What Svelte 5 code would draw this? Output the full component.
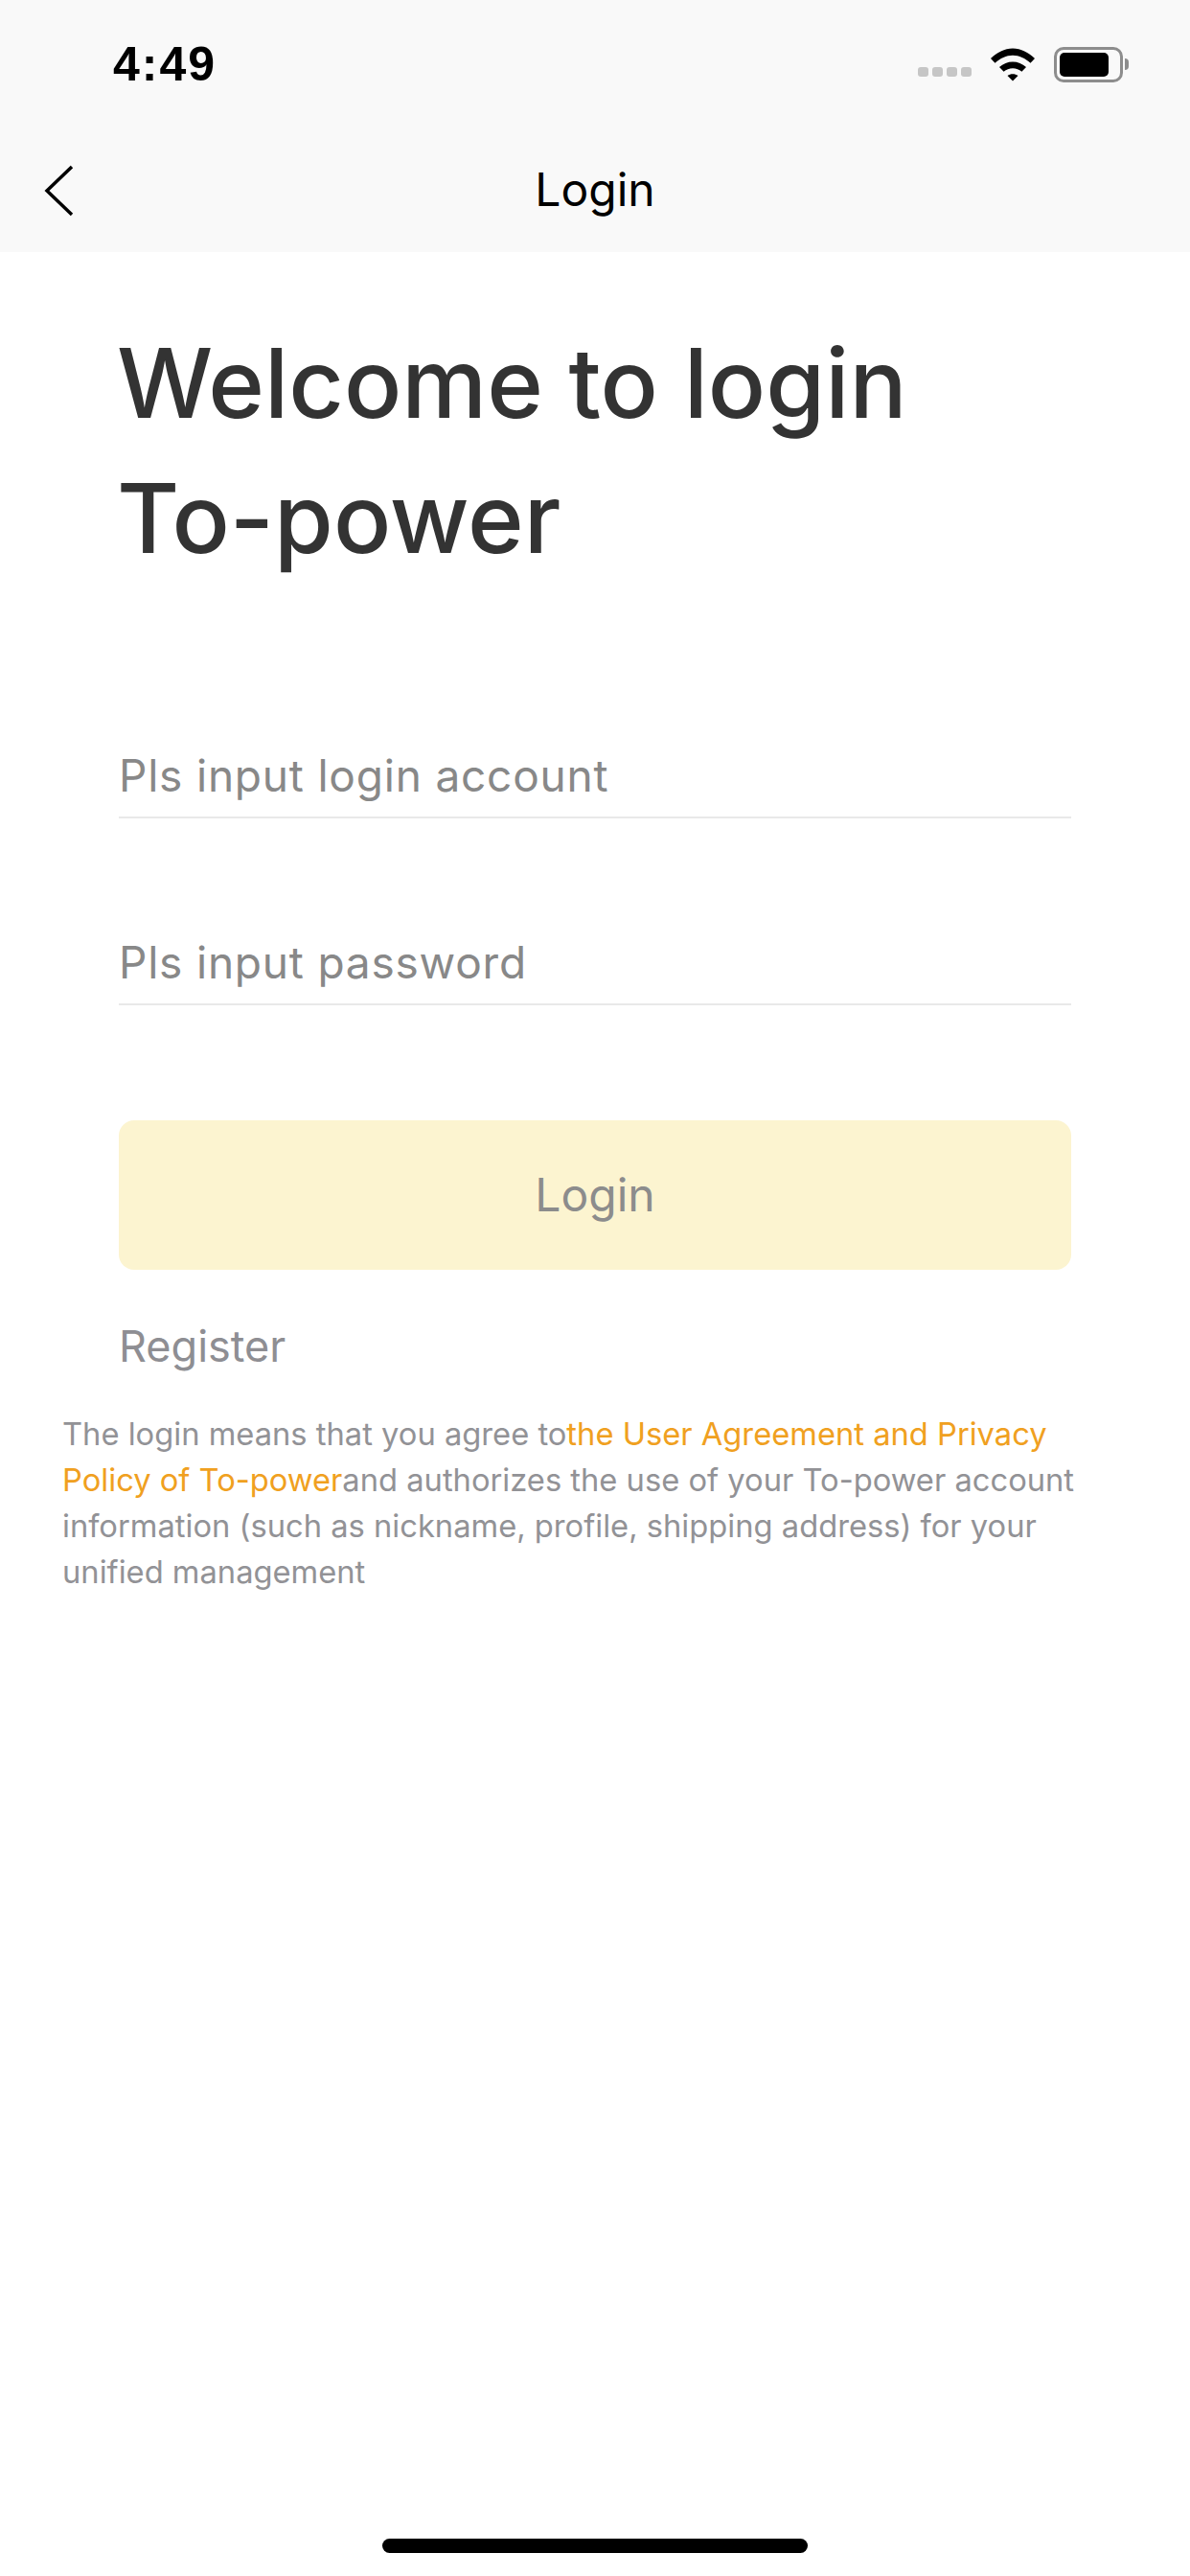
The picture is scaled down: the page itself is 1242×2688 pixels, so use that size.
<script>
  let account = $state("");
  let password = $state("");
</script>

<div class="screen">
  <header class="top">
    <div class="status">
      <span class="time">4:49</span>
      <div class="indicators">
        <div class="dots"><i></i><i></i><i></i><i></i></div>
        <svg class="wifi" width="48" height="37" viewBox="0 0 48 36">
          <path d="M1 11.500C7.500 5.500 15.500 1 24 1s16.500 4.500 23 10.500l-4.500 4.800C37 11.500 30.800 8.300 24 8.300S11 11.500 5.500 16.300z" fill="#000" />
          <path d="M10 20.500c4-3.600 8.800-5.600 14-5.600s10 2 14 5.600l-4.600 4.800c-2.700-2.300-5.900-3.600-9.400-3.600s-6.700 1.300-9.400 3.600z" fill="#000" />
          <path d="M18.500 29.500c1.600-1.200 3.500-1.800 5.500-1.800s3.900.6 5.500 1.800L24 35z" fill="#000" />
        </svg>
        <div class="battery"><div class="level"></div></div>
        <div class="nub"></div>
      </div>
    </div>
    <div class="nav">
      <svg class="back" width="36" height="54" viewBox="0 0 36 54">
        <path d="M31 2 L5 27 L31 52" fill="none" stroke="#000" stroke-width="3.500" />
      </svg>
      <h1>Login</h1>
    </div>
  </header>

  <main>
    <div class="form">
      <h2>Welcome to login<br />To-power</h2>
      <input placeholder="Pls input login account" bind:value={account} />
      <input placeholder="Pls input password" type="password" bind:value={password} />
      <button>Login</button>
      <a class="register" href="#register">Register</a>
    </div>
    <p class="terms">
      The login means that you agree to<span>the User Agreement and Privacy Policy of To-power</span>and authorizes the use of your To-power account information (such as nickname, profile, shipping address) for your unified management
    </p>
  </main>

  <div class="home"></div>
</div>

<style>
  :global(body) {
    margin: 0;
    background: #fff;
  }
  .screen {
    width: 1242px;
    height: 2688px;
    display: flex;
    flex-direction: column;
    font-family: Inter, "Noto Sans", sans-serif;
    position: relative;
    overflow: hidden;
  }
  .top {
    height: 263px;
    background: #f9f9f9;
  }
  .status {
    height: 132px;
    padding: 2px 70px 0 118px;
    box-sizing: border-box;
    display: flex;
    align-items: center;
    justify-content: space-between;
  }
  .time {
    font-family: "Liberation Sans", sans-serif;
    font-size: 50px;
    font-weight: 700;
    letter-spacing: 2px;
    color: #000;
  }
  .indicators {
    display: flex;
    align-items: center;
    position: relative;
  }
  .dots {
    display: flex;
    gap: 4px;
    margin: 16px 19px 0 0;
  }
  .dots i {
    width: 11px;
    height: 10px;
    border-radius: 3px;
    background: #c6c6c6;
  }
  .wifi {
    margin-right: 19px;
  }
  .battery {
    width: 72px;
    height: 37px;
    box-sizing: border-box;
    border: 3px solid #8d8d8d;
    border-radius: 10px;
    padding: 3px;
  }
  .level {
    height: 100%;
    width: 85%;
    background: #000;
    border-radius: 5px;
  }
  .nub {
    position: absolute;
    right: -6px;
    top: 12px;
    width: 4px;
    height: 12px;
    background: #8d8d8d;
    border-radius: 0 4px 4px 0;
  }
  .nav {
    height: 131px;
    position: relative;
    display: flex;
    align-items: center;
    justify-content: center;
  }
  .back {
    position: absolute;
    left: 44px;
    top: 40px;
  }
  h1 {
    margin: 0;
    font-size: 48px;
    font-weight: 400;
    color: #000;
  }
  .form {
    padding: 0 124px;
    display: flex;
    flex-direction: column;
  }
  h2 {
    margin: 0 0 164px -2px;
    padding-top: 66px;
    font-size: 100px;
    line-height: 141px;
    font-weight: 500;
    color: #333;
  }
  input {
    width: 100%;
    box-sizing: border-box;
    height: 79px;
    margin-bottom: 116px;
    padding: 0 0 10px;
    border: 0;
    border-bottom: 2px solid #e9e9e9;
    outline: none;
    background: none;
    font: inherit;
    font-size: 46px;
    letter-spacing: 0.8px;
    color: #333;
  }
  input::placeholder {
    color: #888;
    opacity: 1;
  }
  button {
    height: 156px;
    margin-top: 4px;
    padding: 0 0 2px;
    border: 0;
    border-radius: 16px;
    background: #fcf4d0;
    color: #8c8c8c;
    font: inherit;
    font-size: 48px;
  }
  .register {
    margin-top: 52px;
    font-size: 45px;
    color: #8e8e93;
    text-decoration: none;
  }
  .terms {
    margin: 40px 0 0;
    padding: 0 82px 0 65px;
    font-size: 32.700px;
    line-height: 48px;
    color: #929296;
  }
  .terms span {
    color: #f0a020;
  }
  .home {
    position: absolute;
    left: 399px;
    bottom: 24px;
    width: 444px;
    height: 15px;
    border-radius: 8px;
    background: #000;
  }
</style>
